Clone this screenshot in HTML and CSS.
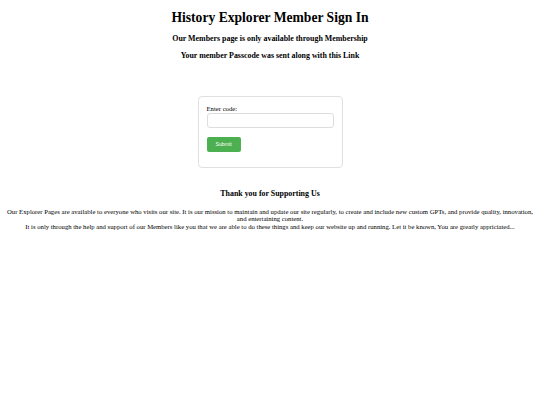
FILE: index.html
```html
<!DOCTYPE html>
<html>
<head>
<meta charset="utf-8">
<title>History Explorer Member Sign In</title>
<link rel="stylesheet" href="styles.css">
</head>
<body>
<h1 class="title">History Explorer Member Sign In</h1>
<h3 class="sub">Our Members page is only available through Membership</h3>
<h3 class="sub">Your member Passcode was sent along with this Link</h3>
<div class="card">
  <form class="form">
    <label class="label" for="code">Enter code:</label>
    <input class="input" id="code" type="text">
    <button class="btn" type="button">Submit</button>
  </form>
</div>
<h3 class="thanks">Thank you for Supporting Us</h3>
<p class="text">Our Explorer Pages are available to everyone who visits our site. It is our mission to maintain and update our site regularly, to create and include new custom GPTs, and provide quality, innovation, and entertaining content.<br>It is only through the help and support of our Members like you that we are able to do these things and keep our website up and running. Let it be known, You are greatly appriciated...</p>
</body>
</html>
```
FILE: styles.css
```css
html { background: #fff; }
body {
  margin: 0 3.6px 3.6px;
  padding-top: 1px;
  font-family: "Liberation Serif", "Times New Roman", serif;
  font-size: 6.7px;
  color: #000;
  text-align: center;
}
.title {
  font-size: 13.6px;
  margin: 8.6px 0 8.5px;
}
.sub {
  font-size: 7.9px;
  margin: 7.9px 0;
}
.card {
  width: 127px;
  margin: 36px auto 0;
  padding: 8px 8px 15px;
  border: 1px solid #e0e0e0;
  border-radius: 4px;
  text-align: left;
}
.form { display: flex; flex-direction: column; align-items: flex-start; }
.label { font-size: 6.7px; line-height: 8px; }
.input {
  box-sizing: border-box;
  width: 100%;
  height: 15px;
  margin: 0;
  border: 1px solid #ddd;
  border-radius: 3px;
  padding: 0 4px;
  font-size: 7px;
}
.btn {
  margin-top: 9px;
  width: 34px;
  height: 15px;
  padding: 0;
  border: none;
  border-radius: 2px;
  background: #4caf50;
  color: #fff;
  font-family: "Liberation Sans", Arial, sans-serif;
  font-size: 5.2px;
}
.thanks {
  font-size: 7.9px;
  margin: 21px 0 10px;
}
.text {
  margin: 0;
  font-size: 6.7px;
  line-height: 7.5px;
}
```
